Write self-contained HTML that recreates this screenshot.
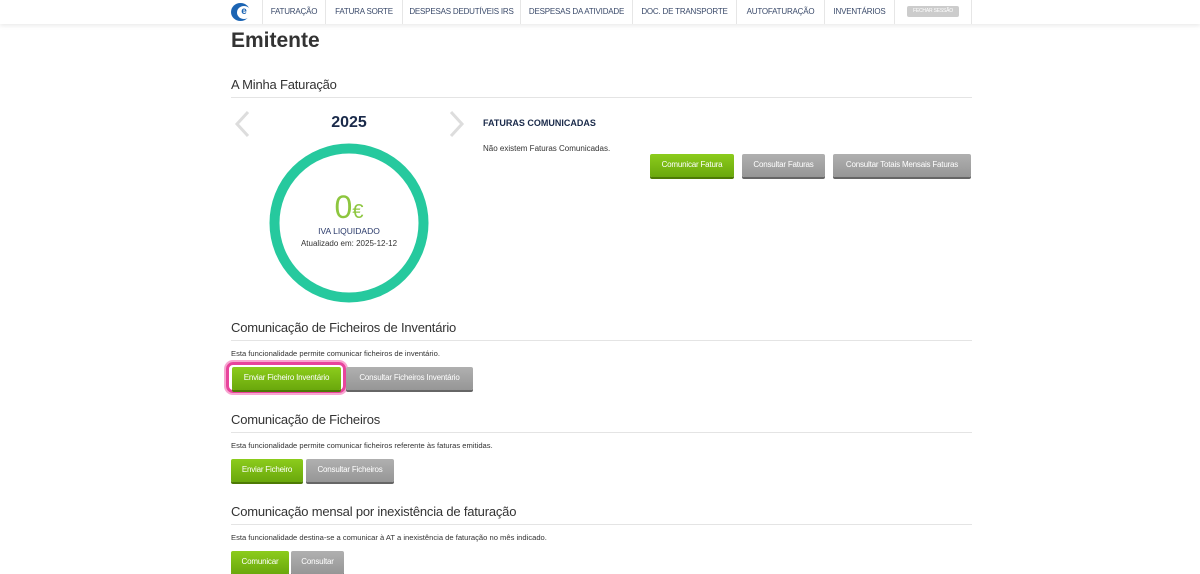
<!DOCTYPE html>
<html><head><meta charset="utf-8"><style>
*{margin:0;padding:0;box-sizing:border-box}
body{width:1200px;height:574px;overflow:hidden;background:#fff;font-family:"Liberation Sans",sans-serif;color:#333;position:relative}
.hdr{position:absolute;left:0;top:0;width:1200px;height:24px;background:#fff;box-shadow:0 2px 4px rgba(0,0,0,.08)}
.nav{position:absolute;top:0;height:24px;font-size:8px;letter-spacing:-0.2px;color:#3a4a6a;line-height:24px;text-align:center;border-left:1px solid #e6e6e6}
.abs{position:absolute}
.btn{position:absolute;height:23px;line-height:22px;font-size:8px;letter-spacing:-0.2px;color:#fff;text-align:center;border-radius:2px}
.g{background:linear-gradient(#8ccc1c,#6aa80c);box-shadow:0 2px 0 #4d7a05}
.gr{background:linear-gradient(#b0b0b0,#969696);box-shadow:0 2px 0 #666}
h2{position:absolute;left:231px;font-weight:normal;font-size:13px;letter-spacing:-0.2px;color:#333}
.line{position:absolute;left:231px;width:741px;height:1px;background:#e4e4e4}
.p{position:absolute;left:231px;font-size:7.6px;color:#333}
</style></head><body>
<div class="hdr">
<div class="abs" style="left:231px;top:3px;width:19px;height:18px;border-radius:50%;background:#1b64b3"></div>
<div class="abs" style="left:237px;top:6px;width:14px;height:13px;border-radius:50%;background:#fff;color:#1b64b3;font-size:10px;line-height:12px;font-weight:bold;text-align:center">e</div>
<div class="nav" style="left:262px;width:63px">FATURAÇÃO</div>
<div class="nav" style="left:325px;width:77px">FATURA SORTE</div>
<div class="nav" style="left:402px;width:118px">DESPESAS DEDUTÍVEIS IRS</div>
<div class="nav" style="left:520px;width:112px">DESPESAS DA ATIVIDADE</div>
<div class="nav" style="left:632px;width:104px">DOC. DE TRANSPORTE</div>
<div class="nav" style="left:736px;width:88px">AUTOFATURAÇÃO</div>
<div class="nav" style="left:824px;width:70px">INVENTÁRIOS</div>
<div class="nav" style="left:894px;width:78px;border-right:1px solid #e6e6e6"><span style="display:inline-block;background:#ccc;color:#fff;font-size:5px;line-height:11px;width:52px;border-radius:2px;vertical-align:middle">FECHAR SESSÃO</span></div>
</div>
<div class="abs" style="left:231px;top:29px;font-size:21px;font-weight:bold;color:#333">Emitente</div>
<h2 style="top:77px">A Minha Faturação</h2>
<div class="line" style="top:97px"></div>
<svg class="abs" style="left:233px;top:110px" width="18" height="28"><path d="M15 2 L4 14 L15 26" fill="none" stroke="#ddd" stroke-width="3"/></svg>
<svg class="abs" style="left:448px;top:110px" width="18" height="28"><path d="M3 2 L14 14 L3 26" fill="none" stroke="#ddd" stroke-width="3"/></svg>
<div class="abs" style="left:300px;top:114px;width:98px;text-align:center;font-size:16px;font-weight:bold;color:#1a2a4a">2025</div>
<svg class="abs" style="left:269px;top:143px" width="160" height="160"><circle cx="80" cy="80" r="74.5" fill="none" stroke="#26c99e" stroke-width="10"/></svg>
<div class="abs" style="left:269px;top:189px;width:160px;text-align:center;color:#8dc63f;font-size:32px;font-weight:300;line-height:36px">0<span style="font-size:20px">€</span></div>
<div class="abs" style="left:269px;top:226px;width:160px;text-align:center;color:#2a3a6a;font-size:8.5px">IVA LIQUIDADO</div>
<div class="abs" style="left:269px;top:239px;width:160px;text-align:center;color:#333;font-size:8px">Atualizado em: 2025-12-12</div>
<div class="abs" style="left:483px;top:118px;font-size:9px;font-weight:bold;color:#1a2a4a">FATURAS COMUNICADAS</div>
<div class="abs" style="left:483px;top:144px;font-size:8px">Não existem Faturas Comunicadas.</div>
<div class="btn g" style="left:650px;top:154px;width:84px">Comunicar Fatura</div>
<div class="btn gr" style="left:742px;top:154px;width:83px">Consultar Faturas</div>
<div class="btn gr" style="left:833px;top:154px;width:138px">Consultar Totais Mensais Faturas</div>
<h2 style="top:320px">Comunicação de Ficheiros de Inventário</h2>
<div class="line" style="top:340px"></div>
<div class="p" style="top:349px">Esta funcionalidade permite comunicar ficheiros de inventário.</div>
<div class="abs" style="left:226px;top:362px;width:120px;height:31px;border:3px solid #e8449c;border-radius:7px;box-shadow:0 0 0 2px #f7a6d0"></div>
<div class="btn g" style="left:232px;top:367px;width:109px">Enviar Ficheiro Inventário</div>
<div class="btn gr" style="left:346px;top:367px;width:127px">Consultar Ficheiros Inventário</div>
<h2 style="top:412px">Comunicação de Ficheiros</h2>
<div class="line" style="top:432px"></div>
<div class="p" style="top:441px">Esta funcionalidade permite comunicar ficheiros referente às faturas emitidas.</div>
<div class="btn g" style="left:231px;top:459px;width:72px">Enviar Ficheiro</div>
<div class="btn gr" style="left:306px;top:459px;width:88px">Consultar Ficheiros</div>
<h2 style="top:504px">Comunicação mensal por inexistência de faturação</h2>
<div class="line" style="top:524px"></div>
<div class="p" style="top:533px">Esta funcionalidade destina-se a comunicar à AT a inexistência de faturação no mês indicado.</div>
<div class="btn g" style="left:231px;top:551px;width:58px">Comunicar</div>
<div class="btn gr" style="left:291px;top:551px;width:53px">Consultar</div>
</body></html>
